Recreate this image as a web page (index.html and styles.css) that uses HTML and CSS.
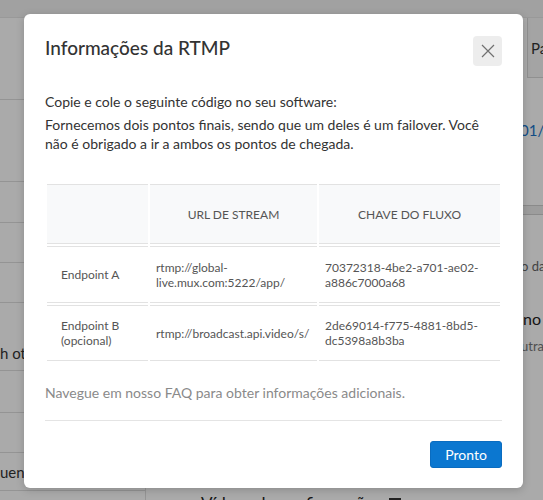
FILE: index.html
```html
<!DOCTYPE html>
<html lang="pt-BR">
<head>
<meta charset="utf-8">
<title>Informações da RTMP</title>
<link rel="stylesheet" href="styles.css">
</head>
<body>
<div class="page">
  <div class="topbar"></div>
  <div class="layout">
    <aside class="sidebar">
      <div class="side-row side-head"></div>
      <div class="side-row r1"></div>
      <div class="side-row r2"></div>
      <div class="side-row r3"></div>
      <div class="side-row r4"></div>
      <div class="side-row r5"><span class="side-text">h other</span></div>
      <div class="side-row r6"></div>
      <div class="side-row r7"></div>
      <div class="side-row r8"><span class="side-text">uencia</span></div>
      <div class="side-row r9"></div>
    </aside>
    <main class="main">
      <div class="tabs"><span class="tab">Pa</span></div>
      <div class="date-row"><span class="date">01/</span></div>
      <div class="band"></div>
      <div class="hint-row"><span class="hint">o da</span></div>
      <div class="big-row"><span class="big">no</span></div>
      <div class="sub-row"><span class="sub">utra</span></div>
      <div class="bottom-row"><span class="bottom-text">Vídeos de configuração</span><span class="bottom-icon"></span></div>
    </main>
  </div>
</div>
<div class="overlay"></div>
<div class="modal" role="dialog" aria-labelledby="modal-title">
  <div class="modal-header">
    <h2 class="modal-title" id="modal-title">Informações da RTMP</h2>
    <button class="close-btn" aria-label="Fechar">
      <svg width="14" height="14" viewBox="0 0 14 14"><path d="M1 1 L13 13 M13 1 L1 13" stroke="#707070" stroke-width="1.2" fill="none"/></svg>
    </button>
  </div>
  <div class="modal-body">
    <p class="lead">Copie e cole o seguinte código no seu software:</p>
    <p class="lead">Fornecemos dois pontos finais, sendo que um deles é um failover. Você não é obrigado a ir a ambos os pontos de chegada.</p>
    <table class="rtmp-table">
      <colgroup><col class="c1"><col class="c2"><col class="c3"></colgroup>
      <thead>
        <tr><th></th><th>URL de stream</th><th>Chave do fluxo</th></tr>
      </thead>
      <tbody>
        <tr class="row-a"><td class="name">Endpoint A</td><td>rtmp://global-live.mux.com:5222/app/</td><td>70372318-4be2-a701-ae02-a886c7000a68</td></tr>
        <tr class="row-b"><td class="name">Endpoint B (opcional)</td><td>rtmp://broadcast.api.video/s/</td><td>2de69014-f775-4881-8bd5-dc5398a8b3ba</td></tr>
      </tbody>
    </table>
    <p class="faq">Navegue em nosso FAQ para obter informações adicionais.</p>
  </div>
  <div class="modal-footer">
    <button class="primary-btn">Pronto</button>
  </div>
</div>
</body>
</html>
```

FILE: styles.css
```css
html, body {
  margin: 0;
  padding: 0;
}
body {
  width: 543px;
  height: 500px;
  overflow: hidden;
  background: #ffffff;
  font-family: Lato, "Noto Sans", sans-serif;
  position: relative;
}
.page {
  height: 500px;
  display: flex;
  flex-direction: column;
}
.topbar {
  height: 17px;
  background: #f2f2f2;
  border-bottom: 1px solid #e6e6e6;
  flex: none;
}
.layout {
  flex: 1;
  display: flex;
  min-height: 0;
}
.sidebar {
  width: 145px;
  flex: none;
  border-right: 1px solid #e0e0e0;
  display: flex;
  flex-direction: column;
}
.side-row {
  flex: none;
  border-bottom: 1px solid #dedede;
  display: flex;
  align-items: center;
  font-size: 15px;
  color: #333;
  box-sizing: border-box;
}
.side-head { height: 82px; }
.r1 { height: 82px; }
.r2 { height: 41px; }
.r3 { height: 40px; }
.r4 { height: 40px; }
.r5 { height: 68px; align-items: flex-end; padding-bottom: 8px; }
.r6 { height: 42px; }
.r7 { height: 40px; }
.r8 { height: 38px; }
.r9 { height: 20px; border-bottom: none; }
.side-text {
  white-space: nowrap;
}
.main {
  flex: 1;
  display: flex;
  flex-direction: column;
  padding-left: 372px;
}
.tabs {
  flex: none;
  height: 59px;
  border-bottom: 1px solid #d8d8d8;
  border-left: 1px solid #d8d8d8;
  display: flex;
  align-items: center;
  margin-left: 9px;
  background: #f7f7f7;
}
.tab {
  font-size: 15px;
  color: #333;
  padding-left: 3px;
}
.date-row {
  flex: none;
  height: 104px;
  display: flex;
  align-items: center;
}
.date {
  font-size: 15px;
  color: #1a73c8;
  margin-left: 2px;
  white-space: nowrap;
}
.band {
  flex: none;
  height: 8px;
  margin-top: 23px;
  background: #ececec;
  border-top: 1px solid #cfcfcf;
  border-bottom: 1px solid #cfcfcf;
}
.hint-row {
  flex: none;
  margin-top: 36px;
  height: 30px;
  display: flex;
  align-items: center;
  font-size: 13px;
  color: #666;
  white-space: nowrap;
}
.hint { margin-left: 3px; }
.big-row {
  flex: none;
  margin-top: 25px;
  height: 24px;
  display: flex;
  align-items: center;
  font-size: 16px;
  color: #222;
}
.big { margin-left: 5px; }
.sub-row {
  flex: none;
  margin-top: 7px;
  height: 18px;
  display: flex;
  align-items: center;
  font-size: 13px;
  color: #777;
  white-space: nowrap;
}
.sub { margin-left: 3px; }
.bottom-row {
  margin-top: auto;
  margin-left: -317px;
  height: 6px;
  display: flex;
  align-items: flex-start;
  gap: 14px;
  white-space: nowrap;
  overflow: visible;
}
.bottom-text {
  font-size: 17px;
  color: #222;
  line-height: 20px;
}
.bottom-icon {
  width: 12px;
  height: 12px;
  background: #333;
  margin-top: 4px;
}

.overlay {
  position: absolute;
  inset: 0;
  background: rgba(0, 0, 0, 0.335);
}

.modal {
  position: absolute;
  left: 24px;
  top: 14px;
  width: 499px;
  box-sizing: border-box;
  padding: 22px 21px 20px;
  background: #ffffff;
  border-radius: 6px;
  box-shadow: 0 2px 8px rgba(0, 0, 0, 0.18);
  font-family: Lato, "Noto Sans", sans-serif;
  color: #333;
}
.modal-header {
  display: flex;
  justify-content: space-between;
  align-items: flex-start;
}
.modal-title {
  margin: 0;
  font-size: 19px;
  line-height: 24px;
  font-weight: 500;
  color: #333;
}
.close-btn {
  width: 29px;
  height: 30px;
  border: none;
  border-radius: 4px;
  background: #ededed;
  padding: 0;
  display: flex;
  align-items: center;
  justify-content: center;
}
.modal-body {
  margin-top: 26px;
}
.lead {
  margin: 0 0 4px;
  font-size: 14px;
  line-height: 19px;
  color: #333;
}
.rtmp-table {
  margin-top: 29px;
  width: 457px;
  table-layout: fixed;
  border-collapse: separate;
  border-spacing: 2px;
}
.c1 { width: 101px; }
.c2 { width: 167px; }
.c3 { width: 181px; }
.rtmp-table th,
.rtmp-table td {
  border-top: 1px solid #e2e2e2;
  border-bottom: 1px solid #e2e2e2;
  padding: 0 6px;
  vertical-align: middle;
}
.rtmp-table th {
  height: 58px;
  background: #f8f9fa;
  font-size: 12px;
  font-weight: 400;
  text-transform: uppercase;
  color: #555;
  text-align: center;
}
.rtmp-table td {
  font-size: 12px;
  line-height: 15px;
  color: #555;
  text-align: left;
}
.row-a td { height: 55px; }
.row-b td { height: 54px; }
.rtmp-table td.name {
  padding-left: 14px;
}
.faq {
  margin: 20px 0 0;
  font-size: 14px;
  line-height: 19px;
  color: #8a8a8a;
  padding-bottom: 18px;
  border-bottom: 1px solid #e4e4e4;
}
.modal-footer {
  display: flex;
  justify-content: flex-end;
  margin-top: 20px;
}
.primary-btn {
  width: 72px;
  height: 27px;
  border: 1px solid #0a6cc0;
  border-radius: 3px;
  background: #0b77d0;
  color: #ffffff;
  font-family: Lato, "Noto Sans", sans-serif;
  font-size: 14px;
  padding: 0;
}
```
